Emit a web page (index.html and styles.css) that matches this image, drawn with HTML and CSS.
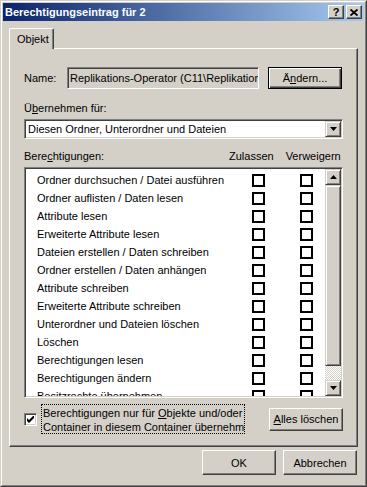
FILE: index.html
```html
<!DOCTYPE html>
<html lang="de">
<head>
    <meta charset="UTF-8">
    <title>Berechtigungseintrag für 2</title>
    <link rel="stylesheet" href="styles.css">
</head>
<body>

<div class="window">
  <div class="frame">

    <!-- Title bar -->
    <div class="titlebar">
        <span class="title">Berechtigungseintrag für 2</span>
        <div class="caption-buttons">
            <span class="cap-btn help">?</span>
            <span class="cap-btn close">
                <svg width="8" height="7" viewBox="0 0 8 7"><path d="M0.5 0.5L7.5 6.5M7.5 0.5L0.5 6.5" stroke="#000" stroke-width="1.8"/></svg>
            </span>
        </div>
    </div>

    <div class="client">
        <div class="tabs">
            <div class="tab">Objekt</div>
        </div>

        <div class="tab-panel">
            <div class="name-row">
                <span class="name-label">Name:</span>
                <div class="field">Replikations-Operator (C11\Replikations-Operator)</div>
                <button class="btn default">Ä<u>n</u>dern...</button>
            </div>

            <div class="apply-label">Ü<u>b</u>ernehmen für:</div>
            <div class="combo">
                <span class="combo-text">Diesen Ordner, Unterordner und Dateien</span>
                <span class="combo-btn">
                    <svg width="7" height="4" viewBox="0 0 7 4"><path d="M0 0H7L3.5 4Z" fill="#000"/></svg>
                </span>
            </div>

            <div class="perm-header">
                <span class="perm-title">Bere<u>c</u>htigungen:</span>
                <span class="col-allow">Zulassen</span>
                <span class="col-deny">Verweigern</span>
            </div>

            <div class="listbox">
                <div class="rows">
                    <div class="perm-row"><span class="perm-name">Ordner durchsuchen / Datei ausführen</span><span class="box"></span><span class="box"></span></div>
                    <div class="perm-row"><span class="perm-name">Ordner auflisten / Daten lesen</span><span class="box"></span><span class="box"></span></div>
                    <div class="perm-row"><span class="perm-name">Attribute lesen</span><span class="box"></span><span class="box"></span></div>
                    <div class="perm-row"><span class="perm-name">Erweiterte Attribute lesen</span><span class="box"></span><span class="box"></span></div>
                    <div class="perm-row"><span class="perm-name">Dateien erstellen / Daten schreiben</span><span class="box"></span><span class="box"></span></div>
                    <div class="perm-row"><span class="perm-name">Ordner erstellen / Daten anhängen</span><span class="box"></span><span class="box"></span></div>
                    <div class="perm-row"><span class="perm-name">Attribute schreiben</span><span class="box"></span><span class="box"></span></div>
                    <div class="perm-row"><span class="perm-name">Erweiterte Attribute schreiben</span><span class="box"></span><span class="box"></span></div>
                    <div class="perm-row"><span class="perm-name">Unterordner und Dateien löschen</span><span class="box"></span><span class="box"></span></div>
                    <div class="perm-row"><span class="perm-name">Löschen</span><span class="box"></span><span class="box"></span></div>
                    <div class="perm-row"><span class="perm-name">Berechtigungen lesen</span><span class="box"></span><span class="box"></span></div>
                    <div class="perm-row"><span class="perm-name">Berechtigungen ändern</span><span class="box"></span><span class="box"></span></div>
                    <div class="perm-row"><span class="perm-name">Besitzrechte übernehmen</span><span class="box"></span><span class="box"></span></div>
                </div>
                <div class="scrollbar">
                    <span class="sb-btn">
                        <svg width="7" height="4" viewBox="0 0 7 4"><path d="M3.5 0L7 4H0Z" fill="#000"/></svg>
                    </span>
                    <span class="sb-thumb"></span>
                    <span class="sb-track"></span>
                    <span class="sb-btn">
                        <svg width="7" height="4" viewBox="0 0 7 4"><path d="M0 0H7L3.5 4Z" fill="#000"/></svg>
                    </span>
                </div>
            </div>

            <div class="bottom-row">
                <span class="check">
                    <svg width="7" height="7" viewBox="0 0 7 7"><path d="M0 2L2 4L7 -1V2L2 7L0 5Z" fill="#000"/></svg>
                </span>
                <div class="check-label">
                    Berechtigungen nur für <u>O</u>bjekte und/oder<br>
                    Container in diesem Container übernehmen
                </div>
                <button class="btn clear-btn"><u>A</u>lles löschen</button>
            </div>
        </div>

        <div class="footer">
            <button class="btn">OK</button>
            <button class="btn">Abbrechen</button>
        </div>
    </div>

  </div>
</div>

</body>
</html>
```

FILE: styles.css
```css
* {
    box-sizing: border-box;
}

body {
    margin: 0;
    background-color: #d4d0c8;
    font-family: "Liberation Sans", Arial, sans-serif;
    font-size: 11px;
    color: #000;
}

/* Window frame */
.window {
    width: 367px;
    height: 487px;
    border: 1px solid;
    border-color: #d4d0c8 #404040 #404040 #d4d0c8;
}

.frame {
    height: 100%;
    border: 1px solid;
    border-color: #fff #808080 #808080 #fff;
    padding: 1px;
    display: flex;
    flex-direction: column;
}

.titlebar {
    flex: none;
    height: 18px;
    padding: 0 2px;
    display: flex;
    align-items: center;
    justify-content: space-between;
    background: linear-gradient(to right, #0a246a, #a6caf0);
}

.title {
    color: #fff;
    font-weight: bold;
}

.caption-buttons {
    display: flex;
    gap: 2px;
}

.cap-btn {
    width: 16px;
    height: 14px;
    display: flex;
    align-items: center;
    justify-content: center;
    background: #d4d0c8;
    border: 1px solid;
    border-color: #fff #404040 #404040 #fff;
    box-shadow: inset -1px -1px #808080;
    font-weight: bold;
    font-size: 11px;
    line-height: 1;
}

/* Client area */
.client {
    flex: 1;
    display: flex;
    flex-direction: column;
    padding: 7px 6px 0 6px;
}

.tabs {
    height: 20px;
    display: flex;
    position: relative;
    z-index: 1;
}

.tab {
    width: 45px;
    height: 21px;
    padding: 4px 0 0 7px;
    line-height: 13px;
    background: #d4d0c8;
    border: 1px solid;
    border-bottom: none;
    border-color: #fff #404040 #fff #fff;
    box-shadow: inset -1px 0 #808080;
    border-radius: 2px 2px 0 0;
}

.tab-panel {
    height: 399px;
    padding: 18px 14px 0 14px;
    border: 1px solid;
    border-color: #fff #404040 #404040 #fff;
    box-shadow: inset -1px -1px #808080;
}

/* Shared controls */
.btn {
    width: 74px;
    height: 22px;
    padding: 0;
    font: inherit;
    color: #000;
    background: #d4d0c8;
    border: 1px solid;
    border-color: #fff #404040 #404040 #fff;
    box-shadow: inset -1px -1px #808080;
}

.btn.default {
    border-color: #000;
    box-shadow: inset 1px 1px #fff, inset -1px -1px #404040, inset -2px -2px #808080;
}

/* Name row */
.name-row {
    height: 22px;
    display: flex;
    align-items: center;
}

.name-label {
    width: 43px;
}

.field {
    width: 192px;
    height: 22px;
    padding-left: 2px;
    line-height: 20px;
    white-space: nowrap;
    overflow: hidden;
    background: #d4d0c8;
    border: 1px solid;
    border-color: #808080 #fff #fff #808080;
    box-shadow: inset 1px 1px #404040, inset -1px -1px #d4d0c8;
}

.name-row .btn {
    margin-left: 9px;
}

/* Apply to */
.apply-label {
    margin-top: 13px;
    line-height: 13px;
}

.combo {
    margin-top: 4px;
    height: 20px;
    display: flex;
    align-items: center;
    background: #fff;
    border: 1px solid;
    border-color: #808080 #fff #fff #808080;
    box-shadow: inset 1px 1px #404040, inset -1px -1px #d4d0c8;
    padding: 1px 1px 1px 3px;
}

.combo-text {
    flex: 1;
    white-space: nowrap;
}

.combo-btn {
    width: 16px;
    height: 16px;
    display: flex;
    align-items: center;
    justify-content: center;
    background: #d4d0c8;
    border: 1px solid;
    border-color: #d4d0c8 #404040 #404040 #d4d0c8;
    box-shadow: inset 1px 1px #fff, inset -1px -1px #808080;
}

/* Permissions list */
.perm-header {
    margin-top: 11px;
    line-height: 13px;
    display: flex;
}

.perm-title {
    width: 205px;
}

.col-deny {
    margin-left: 12px;
}

.listbox {
    margin-top: 4px;
    height: 231px;
    display: flex;
    background: #fff;
    border: 1px solid;
    border-color: #808080 #fff #fff #808080;
    box-shadow: inset 1px 1px #404040, inset -1px -1px #d4d0c8;
    padding: 1px;
}

.rows {
    flex: 1;
    overflow: hidden;
    padding-top: 2px;
}

.perm-row {
    height: 18px;
    padding-left: 11px;
    display: grid;
    grid-template-columns: 180px 13px 13px;
    column-gap: 35px;
    align-items: center;
    white-space: nowrap;
}

.perm-name {
    overflow: visible;
}

.box {
    width: 13px;
    height: 13px;
    border: 2px solid #000;
    background: #fff;
}

.scrollbar {
    width: 16px;
    display: flex;
    flex-direction: column;
}

.sb-btn,
.sb-thumb {
    background: #d4d0c8;
    border: 1px solid;
    border-color: #d4d0c8 #404040 #404040 #d4d0c8;
    box-shadow: inset 1px 1px #fff, inset -1px -1px #808080;
}

.sb-btn {
    height: 16px;
    display: flex;
    align-items: center;
    justify-content: center;
}

.sb-thumb {
    height: 181px;
}

.sb-track {
    flex: 1;
    background: repeating-conic-gradient(#d4d0c8 0 25%, #fff 0 50%) 0 0 / 2px 2px;
}

/* Bottom row */
.bottom-row {
    margin-top: 6px;
    height: 30px;
    display: flex;
    align-items: center;
}

.check {
    width: 13px;
    height: 13px;
    display: flex;
    align-items: center;
    justify-content: center;
    background: #fff;
    border: 1px solid;
    border-color: #808080 #fff #fff #808080;
    box-shadow: inset 1px 1px #404040, inset -1px -1px #d4d0c8;
}

.check-label {
    width: 204px;
    height: 30px;
    margin-left: 4px;
    padding: 1px 0 0 1px;
    line-height: 14px;
    white-space: nowrap;
    overflow: hidden;
    border: 1px dotted #000;
}

.clear-btn {
    margin-left: auto;
    height: 23px;
}

/* Dialog buttons */
.footer {
    margin-top: 3px;
    padding-right: 1px;
    display: flex;
    justify-content: flex-end;
    gap: 7px;
}

.footer .btn {
    height: 25px;
}
```
